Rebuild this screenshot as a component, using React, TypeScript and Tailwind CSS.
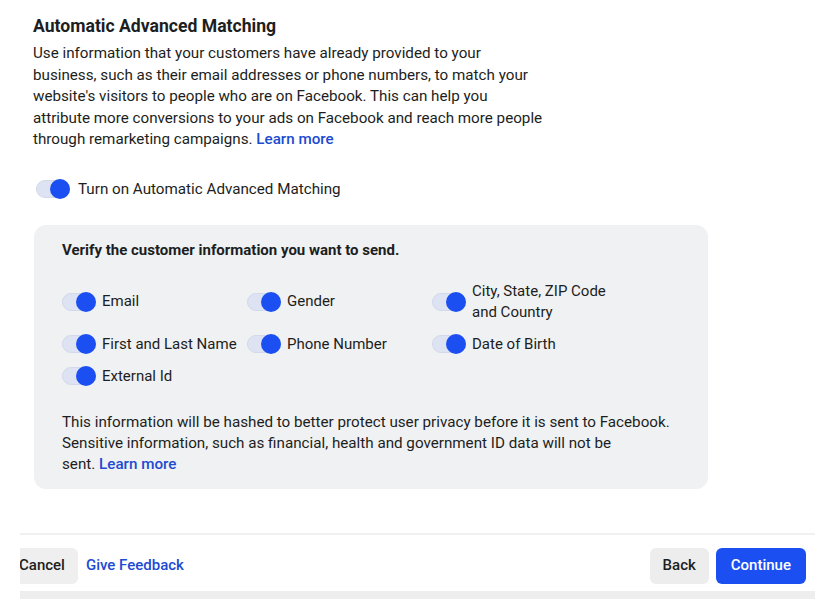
import React from 'react';

function Toggle() {
    return (
        <span className="relative inline-flex items-center w-[34px] h-[20px] shrink-0">
            <span className="absolute left-0 right-0 top-[1px] bottom-[1px] rounded-full bg-[#dde3f2] border border-[#d2d9ea]" />
            <span className="absolute right-0 top-0 w-[20px] h-[20px] rounded-full bg-[#1b4ff2]" />
        </span>
    );
}

const fields = [
    { label: 'Email' },
    { label: 'Gender' },
    { label: 'City, State, ZIP Code and Country', wide: true },
    { label: 'First and Last Name' },
    { label: 'Phone Number' },
    { label: 'Date of Birth' },
    { label: 'External Id' },
];

export default function App() {
    return (
        <div className="w-[829px] h-[608px] bg-white overflow-hidden text-[#1c1e21]" style={{ fontFamily: 'Roboto, "Liberation Sans", sans-serif' }}>
            <div className="pl-[33px] pt-[15px]">
                <h1 className="text-[17.6px] leading-[22px] font-bold">Automatic Advanced Matching</h1>
                <p className="mt-[6px] text-[15.2px] leading-[21.5px] whitespace-nowrap">
                    Use information that your customers have already provided to your<br />
                    business, such as their email addresses or phone numbers, to match your<br />
                    website's visitors to people who are on Facebook. This can help you<br />
                    attribute more conversions to your ads on Facebook and reach more people<br />
                    through remarketing campaigns.{' '}
                    <a className="text-[#1d4bd1] font-medium">Learn more</a>
                </p>

                <div className="mt-[28px] flex items-center gap-[8px] pl-[3px]">
                    <Toggle />
                    <span className="text-[15.2px] leading-[20px]">Turn on Automatic Advanced Matching</span>
                </div>

                <div className="mt-[26px] ml-[1px] w-[674px] rounded-xl bg-[#f0f1f3] pl-[28px] pr-[28px] pt-[15px] pb-[14px]">
                    <h2 className="text-[15px] leading-[20px] font-bold">Verify the customer information you want to send.</h2>
                    <div className="mt-[21px] grid grid-cols-[185px_185px_185px] gap-y-[11px] items-center">
                        {fields.map(f => (
                            <div key={f.label} className="flex items-center gap-[6px]">
                                <Toggle />
                                {f.wide ? (
                                    <span className="text-[15px] leading-[21px] w-[140px]">City, State, ZIP Code<br />and Country</span>
                                ) : (
                                    <span className="text-[15px] leading-[21px] whitespace-nowrap">{f.label}</span>
                                )}
                            </div>
                        ))}
                    </div>
                    <p className="mt-[25px] text-[15.2px] leading-[21px] whitespace-nowrap">
                        This information will be hashed to better protect user privacy before it is sent to Facebook.<br />
                        Sensitive information, such as financial, health and government ID data will not be<br />
                        sent.{' '}
                        <a className="text-[#1d4bd1] font-medium">Learn more</a>
                    </p>
                </div>
            </div>

            <div className="mt-[44px] ml-[20px] w-[795px] overflow-hidden">
                <div className="h-[2px] bg-[#f0f0f0]" />
                <div className="flex items-center justify-between pt-[13px] pb-[7px] pr-[9px]">
                    <div className="flex items-center gap-[8px]">
                        <button className="-ml-[14px] h-[36px] pl-[13px] pr-[13px] rounded-md bg-[#efefef] text-[15px] font-medium text-[#1c1e21]">Cancel</button>
                        <button className="text-[15px] font-medium text-[#1d4bd1]">Give Feedback</button>
                    </div>
                    <div className="flex items-center gap-[7px]">
                        <button className="h-[36px] px-[13px] rounded-md bg-[#ededed] text-[15px] font-medium text-[#1c1e21]">Back</button>
                        <button className="h-[36px] px-[15px] rounded-md bg-[#1b4ff2] text-[15px] font-medium text-white">Continue</button>
                    </div>
                </div>
                <div className="h-[8px] bg-[#eeeeee]" />
            </div>
        </div>
    );
}
